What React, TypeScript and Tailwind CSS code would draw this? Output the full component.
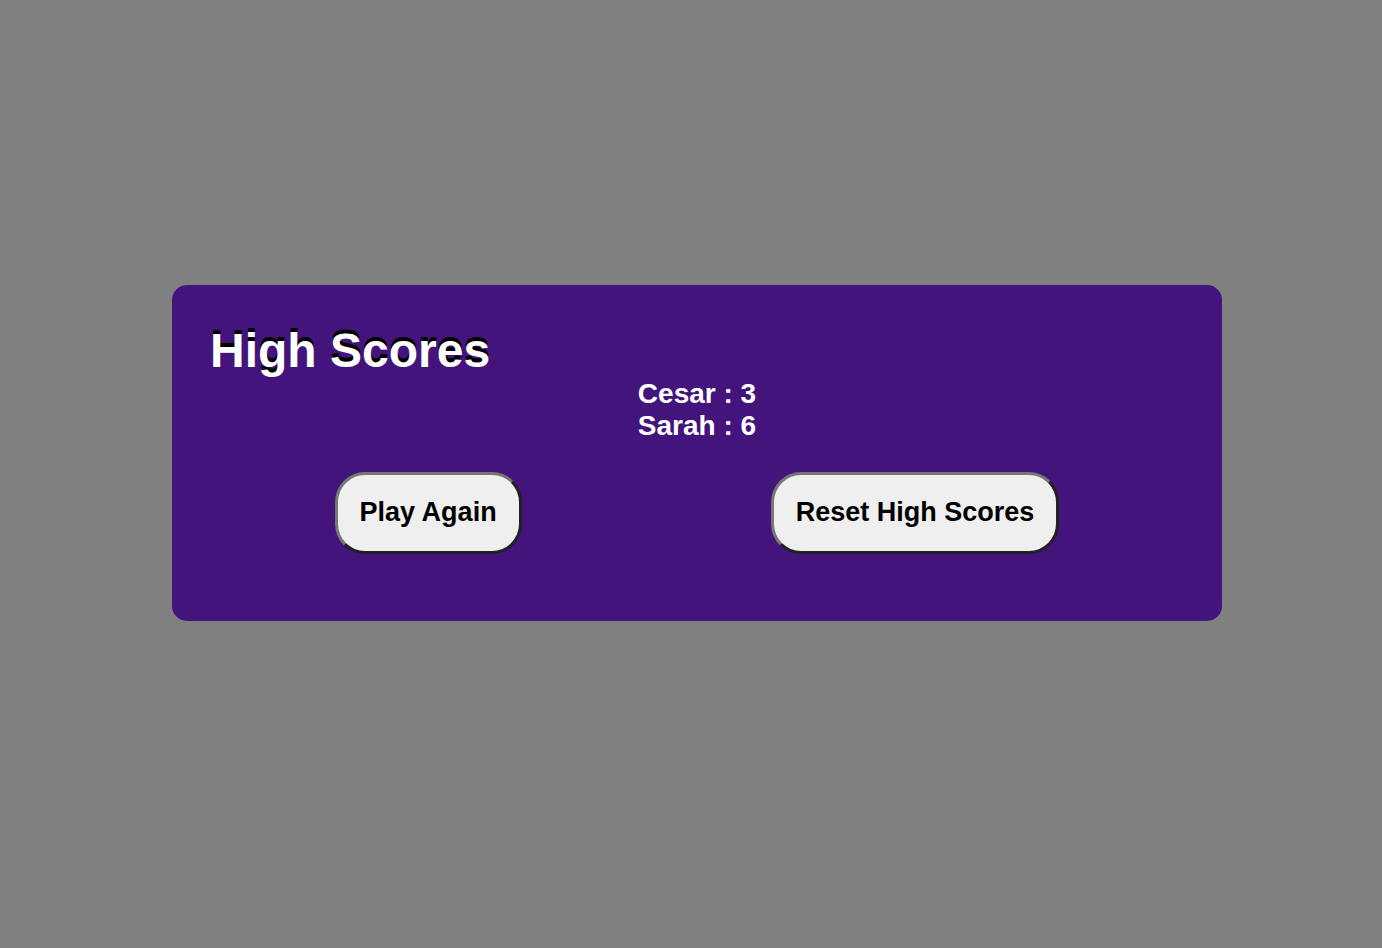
export default function App() {
  const scores = [
    { name: "Cesar", score: 3 },
    { name: "Sarah", score: 6 },
  ];
  const button =
    "rounded-[30px] border-[3px] border-t-[#767676] border-r-[#212121] border-b-[#212121] border-l-[#767676] bg-[#efefef] px-[22px] pt-[22px] pb-6 text-[27px] leading-[30px] font-bold text-black";
  return (
    <main className="flex min-h-screen items-center justify-center bg-[#808080] pb-[42px] pl-3 font-['Liberation_Sans',Arial,sans-serif]">
      <section className="w-[1050px] max-w-[90%] rounded-[15px] bg-[#43147b] px-[38px] pt-[38px] pb-[67px] text-white">
        <h1 className="text-[48px] leading-[55px] font-bold [text-shadow:0_-4px_0_#000]">High Scores</h1>
        <ol className="mx-auto w-fit text-[28px] leading-[32px] font-bold">
          {scores.map((s) => (
            <li key={s.name}>
              {s.name} : {s.score}
            </li>
          ))}
        </ol>
        <div className="mt-[30px] flex flex-wrap justify-around">
          <button type="button" className={button}>Play Again</button>
          <button type="button" className={button}>Reset High Scores</button>
        </div>
      </section>
    </main>
  );
}
